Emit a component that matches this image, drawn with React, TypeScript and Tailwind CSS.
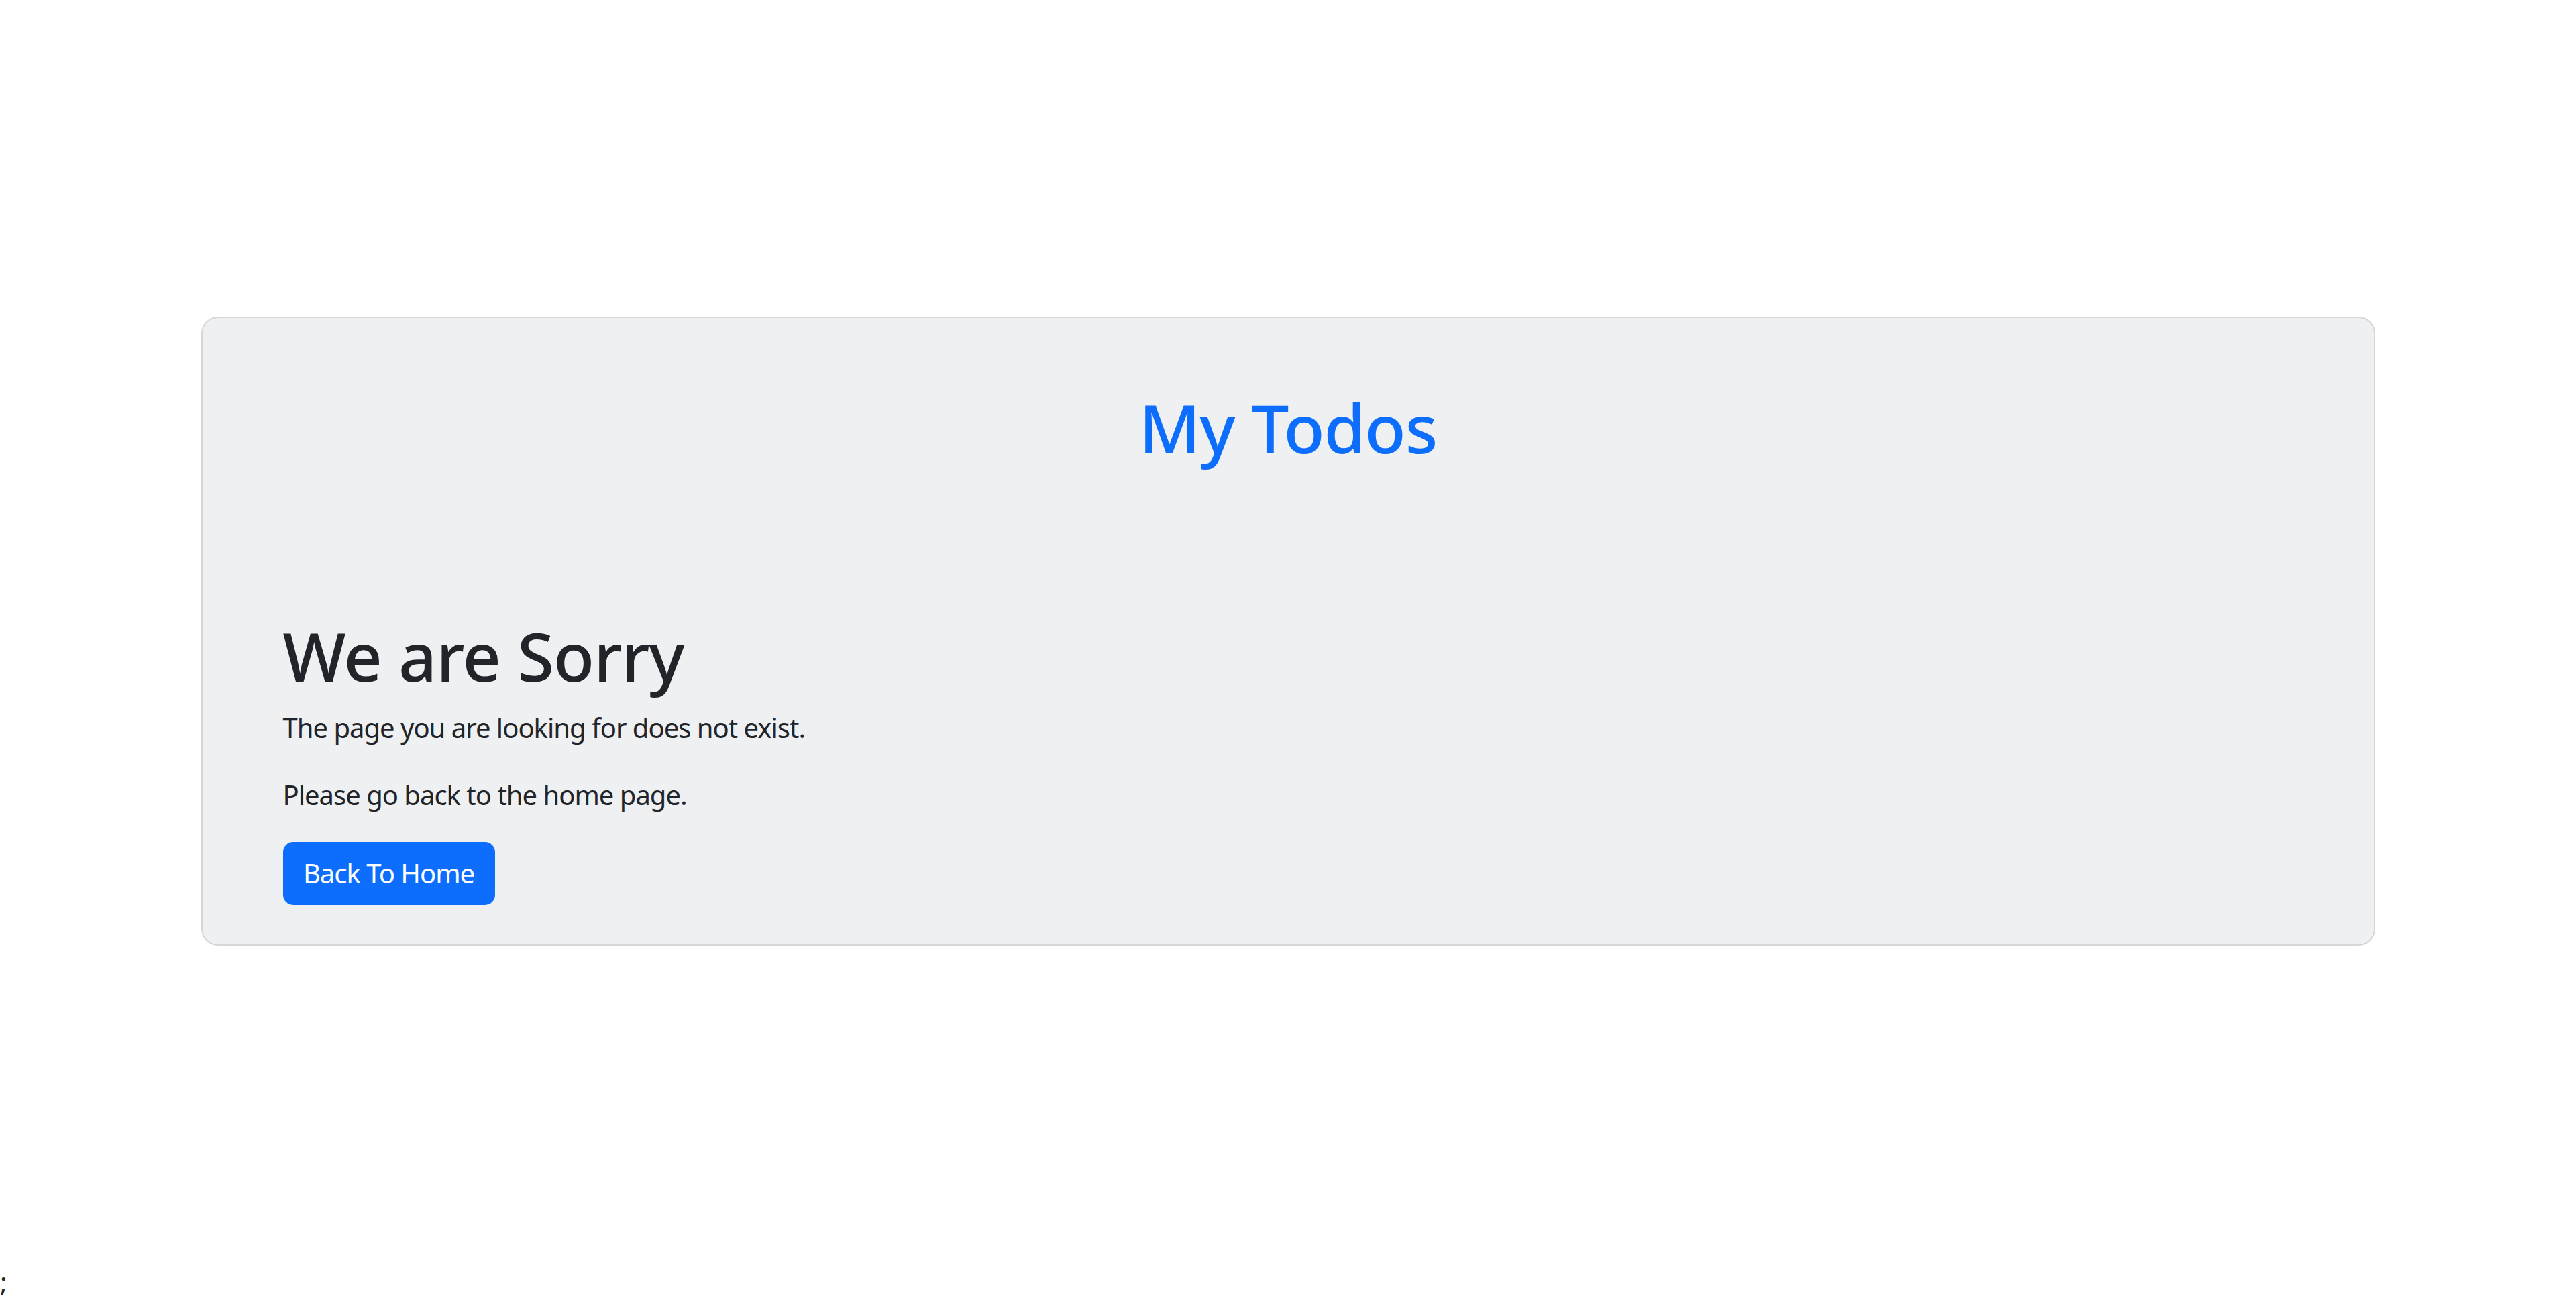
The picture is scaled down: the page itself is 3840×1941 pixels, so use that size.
import React from "react";

const App = () => {
  return (
    <div className="font-['Noto_Sans',sans-serif] text-[40px] leading-[1.5] tracking-[-0.025em] text-[#212529] bg-white">
      <div className="h-[1881px] flex items-center justify-center">
        <div className="w-[3241px] rounded-[25px] border-2 border-[#d5d6d8] bg-[#eff0f2] px-[120px] pt-[103px] pb-[59px]">
          {/* Header */}
          <h1 className="text-center text-[100px] font-medium leading-[1.2] text-[#0d6efd]">
            My Todos
          </h1>

          {/* Not found */}
          <div className="mt-[220px]">
            <h2 className="text-[100px] font-medium leading-[1.2]">We are Sorry</h2>
            <p className="mt-[18px]">The page you are looking for does not exist.</p>
            <p className="mt-[40px]">Please go back to the home page.</p>
            <button className="mt-[40px] flex items-center justify-center whitespace-nowrap w-[316px] h-[94px] rounded-[15px] bg-[#0d6efd] text-white">
              Back To Home
            </button>
          </div>
        </div>
      </div>
      <div>;</div>
    </div>
  );
};

export default App;
